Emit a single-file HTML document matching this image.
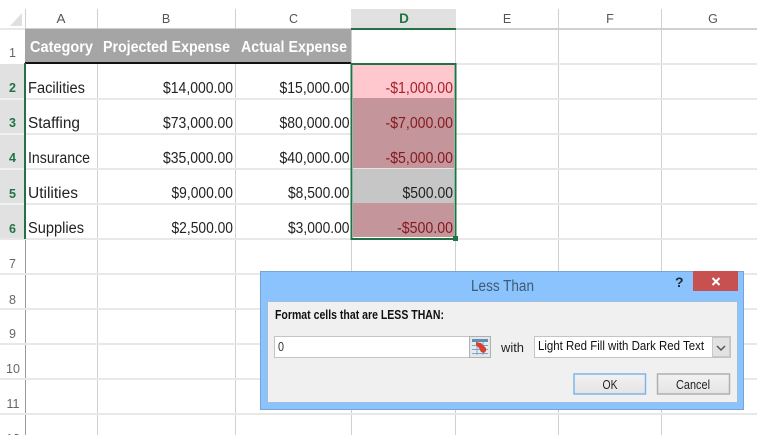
<!DOCTYPE html>
<html>
<head>
<meta charset="utf-8">
<style>
html,body{margin:0;padding:0;width:757px;height:435px;overflow:hidden;background:#fff}
svg{display:block}
text{font-family:"Liberation Sans",sans-serif}
.c{font-size:15.500px;fill:#222}
.h{font-size:15.500px;font-weight:bold;fill:#fff}
.r{font-size:12.500px;fill:#555;text-anchor:middle}
.g{font-size:12.500px;font-weight:bold;fill:#217346;text-anchor:middle}
.n{font-size:12.500px;fill:#666;text-anchor:middle}
.d{font-size:12.500px;fill:#111}
</style>
</head>
<body>
<svg width="757" height="435" viewBox="0 0 757 435" xmlns="http://www.w3.org/2000/svg">
<rect width="757" height="435" fill="#fff"/>

<!-- corner -->
<polygon points="22,13 22,26 10,26" fill="#dfdfdf"/>

<!-- row header fill -->
<rect x="0" y="64" width="24" height="175" fill="#e1e1e1"/>

<!-- vertical grid -->
<g fill="#d0d0d0">
<rect x="97" y="9" width="1" height="426"/>
<rect x="235" y="9" width="1" height="426"/>
<rect x="351" y="30" width="1" height="405"/>
<rect x="455" y="30" width="1" height="405"/>
<rect x="558" y="9" width="1" height="426"/>
<rect x="661" y="9" width="1" height="426"/>
</g>
<rect x="25" y="9" width="1" height="20" fill="#d0d0d0"/>
<rect x="25" y="239" width="1" height="196" fill="#9a9a9a"/>

<!-- horizontal grid -->
<g fill="#e8e8e8">
<rect x="0" y="98" width="757" height="2"/>
<rect x="0" y="133" width="757" height="2"/>
<rect x="0" y="168" width="757" height="2"/>
<rect x="0" y="203" width="757" height="2"/>
<rect x="0" y="238" width="757" height="2"/>
<rect x="0" y="273" width="757" height="2"/>
<rect x="0" y="308" width="757" height="2"/>
<rect x="0" y="343" width="757" height="2"/>
<rect x="0" y="378" width="757" height="2"/>
<rect x="0" y="413" width="757" height="2"/>
<rect x="351" y="63" width="406" height="2"/>
<rect x="0" y="28" width="25" height="2"/>
</g>
<g fill="#f0f0f0">
<rect x="0" y="98" width="24" height="2"/>
<rect x="0" y="133" width="24" height="2"/>
<rect x="0" y="168" width="24" height="2"/>
<rect x="0" y="203" width="24" height="2"/>
</g>
<rect x="25" y="28" width="732" height="2" fill="#d0d0d0"/>

<!-- header band -->
<rect x="25" y="29" width="326" height="33" fill="#a5a5a5"/>
<rect x="25" y="62" width="326" height="2" fill="#111"/>

<!-- column D header -->
<rect x="351" y="9" width="105" height="19" fill="#e1e1e1"/>
<rect x="351" y="28" width="105" height="2" fill="#217346"/>

<!-- D cell fills -->
<rect x="352" y="65" width="103" height="174" fill="#fff"/>
<rect x="353" y="65" width="101" height="33" fill="#ffc7ce"/>
<rect x="353" y="98" width="101" height="70" fill="#c4969c"/>
<rect x="353" y="168" width="101" height="1" fill="#e4e4e4"/>
<rect x="353" y="169" width="101" height="34" fill="#c6c6c6"/>
<rect x="353" y="203" width="101" height="34" fill="#c4969c"/>

<!-- selection -->
<rect x="24" y="63" width="2" height="176" fill="#217346"/>
<rect x="351.500" y="64" width="104" height="175" fill="none" stroke="#217346" stroke-width="2"/>
<rect x="453" y="236" width="5" height="5" fill="#217346"/>

<!-- column letters -->
<text class="r" x="61" y="23" textLength="9" lengthAdjust="spacingAndGlyphs">A</text>
<text class="r" x="166" y="23">B</text>
<text class="r" x="293.500" y="23">C</text>
<text class="g" x="404" y="23" style="font-size:13.500px">D</text>
<text class="r" x="507" y="23">E</text>
<text class="r" x="610" y="23">F</text>
<text class="r" x="713" y="23">G</text>

<!-- row numbers -->
<text class="n" x="12.500" y="57">1</text>
<text class="g" x="12.500" y="92">2</text>
<text class="g" x="12.500" y="127">3</text>
<text class="g" x="12.500" y="162">4</text>
<text class="g" x="12.500" y="198">5</text>
<text class="g" x="12.500" y="233">6</text>
<text class="n" x="12.500" y="268">7</text>
<text class="n" x="12.500" y="304">8</text>
<text class="n" x="12.500" y="338">9</text>
<text class="n" x="13" y="373">10</text>
<text class="n" x="13" y="408">11</text>
<text class="n" x="13" y="443">12</text>

<!-- header text -->
<text class="h" x="30" y="52" textLength="63" lengthAdjust="spacingAndGlyphs">Category</text>
<text class="h" x="103" y="52" textLength="127" lengthAdjust="spacingAndGlyphs">Projected Expense</text>
<text class="h" x="241" y="52" textLength="106" lengthAdjust="spacingAndGlyphs">Actual Expense</text>

<!-- col A -->
<text class="c" x="28" y="93" textLength="57" lengthAdjust="spacingAndGlyphs">Facilities</text>
<text class="c" x="28" y="128" textLength="52" lengthAdjust="spacingAndGlyphs">Staffing</text>
<text class="c" x="28" y="163" textLength="62" lengthAdjust="spacingAndGlyphs">Insurance</text>
<text class="c" x="28" y="198" textLength="50" lengthAdjust="spacingAndGlyphs">Utilities</text>
<text class="c" x="28" y="233" textLength="56" lengthAdjust="spacingAndGlyphs">Supplies</text>

<!-- col B -->
<text class="c" x="163" y="93" textLength="70" lengthAdjust="spacingAndGlyphs">$14,000.00</text>
<text class="c" x="163" y="128" textLength="70" lengthAdjust="spacingAndGlyphs">$73,000.00</text>
<text class="c" x="163" y="163" textLength="70" lengthAdjust="spacingAndGlyphs">$35,000.00</text>
<text class="c" x="171.500" y="198" textLength="61.500" lengthAdjust="spacingAndGlyphs">$9,000.00</text>
<text class="c" x="171.500" y="233" textLength="61.500" lengthAdjust="spacingAndGlyphs">$2,500.00</text>

<!-- col C -->
<text class="c" x="279.500" y="93" textLength="70" lengthAdjust="spacingAndGlyphs">$15,000.00</text>
<text class="c" x="279.500" y="128" textLength="70" lengthAdjust="spacingAndGlyphs">$80,000.00</text>
<text class="c" x="279.500" y="163" textLength="70" lengthAdjust="spacingAndGlyphs">$40,000.00</text>
<text class="c" x="288" y="198" textLength="61.500" lengthAdjust="spacingAndGlyphs">$8,500.00</text>
<text class="c" x="288" y="233" textLength="61.500" lengthAdjust="spacingAndGlyphs">$3,000.00</text>

<!-- col D -->
<text class="c" style="fill:#a8202c" x="385.500" y="93" textLength="67.500" lengthAdjust="spacingAndGlyphs">-$1,000.00</text>
<text class="c" style="fill:#861a20" x="385.500" y="128" textLength="67.500" lengthAdjust="spacingAndGlyphs">-$7,000.00</text>
<text class="c" style="fill:#861a20" x="385.500" y="163" textLength="67.500" lengthAdjust="spacingAndGlyphs">-$5,000.00</text>
<text class="c" x="402.500" y="198" textLength="50.500" lengthAdjust="spacingAndGlyphs">$500.00</text>
<text class="c" style="fill:#861a20" x="397" y="233" textLength="56" lengthAdjust="spacingAndGlyphs">-$500.00</text>

<!-- dialog -->
<rect x="260.500" y="271.500" width="483" height="138" fill="#8ac3fe" stroke="#76a4d6"/>
<rect x="267.500" y="301.500" width="470" height="101" fill="#f0f0f0" stroke="#a4bdd6"/>
<text x="471" y="291" font-size="15.500" fill="#3f5a72" textLength="63" lengthAdjust="spacingAndGlyphs">Less Than</text>
<text x="675" y="287" font-size="14" font-weight="bold" fill="#1c2a36">?</text>
<rect x="693" y="271" width="45" height="20" fill="#c75050"/>
<path d="M712.500 278l7 7M719.500 278l-7 7" stroke="#fff" stroke-width="2" fill="none"/>

<text class="d" x="275" y="319" textLength="169" lengthAdjust="spacingAndGlyphs" style="font-weight:bold;fill:#111">Format cells that are LESS THAN:</text>

<!-- input -->
<rect x="274.500" y="336.500" width="195" height="21" fill="#fff" stroke="#c4c4c4"/>
<text class="d" x="278" y="351" textLength="6" lengthAdjust="spacingAndGlyphs" style="fill:#333">0</text>
<!-- ref button -->
<rect x="469.500" y="336.500" width="21" height="21" fill="#e6e6e6" stroke="#b0b0b0"/>
<rect x="472" y="339" width="16" height="16" fill="#e3ecf5"/>
<rect x="472" y="339" width="16" height="3" fill="#5f8fb8"/>
<path d="M472 345.500h16M472 349.500h16M472 353.500h16M477 342v13M483 342v13" stroke="#7fa6c6" stroke-width="1" fill="none"/>
<path d="M476 342l5 1 5 5v3l-2 2-3-1-2-4-3-3z" fill="#d8402c"/>

<text class="d" x="501" y="352" textLength="23" lengthAdjust="spacingAndGlyphs" style="fill:#222">with</text>

<!-- select -->
<rect x="534.500" y="336.500" width="196" height="21" fill="#fff" stroke="#c4c4c4"/>
<rect x="712.500" y="337.500" width="17" height="19" fill="#e2e2e2" stroke="#c8c8c8"/>
<path d="M717 346l4 4 4-4" stroke="#555" stroke-width="1.500" fill="none"/>
<text class="d" x="538" y="350" textLength="166" lengthAdjust="spacingAndGlyphs" style="fill:#111">Light Red Fill with Dark Red Text</text>

<!-- buttons -->
<defs>
<linearGradient id="b" x1="0" y1="0" x2="0" y2="1">
<stop offset="0" stop-color="#f2f2f2"/><stop offset="1" stop-color="#e4e4e4"/>
</linearGradient>
</defs>
<rect x="574" y="374" width="71.500" height="20" fill="url(#b)" stroke="#7db5ec" stroke-width="1.500"/>
<text class="d" x="602.500" y="389" textLength="15" lengthAdjust="spacingAndGlyphs" style="fill:#222">OK</text>
<rect x="657.500" y="374" width="72" height="20" fill="url(#b)" stroke="#b0b0b0" stroke-width="1.500"/>
<text class="d" x="676" y="389" textLength="34" lengthAdjust="spacingAndGlyphs" style="fill:#222">Cancel</text>
</svg>
</body>
</html>
